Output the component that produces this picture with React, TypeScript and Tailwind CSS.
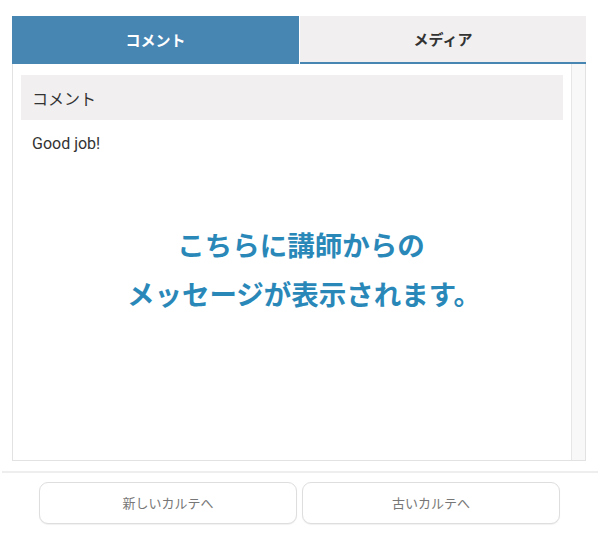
import React from "react";

const jp = { fontFamily: '"Noto Sans CJK JP", "Noto Sans", sans-serif' };

export default function App() {
  return (
    <div className="w-[600px] h-[540px] bg-white pt-[16px] overflow-hidden" style={jp}>
      <div className="ml-[12px] w-[574px]">
        <div className="flex h-[48px]">
          <div className="w-[287px] bg-[#4785b3] flex items-center justify-center text-white font-bold text-[15px]">
            コメント
          </div>
          <div className="w-[1px] bg-white" />
          <div className="flex-1 bg-[#f1eff0] border-b-2 border-[#4785b3] flex items-center justify-center text-[#333] font-bold text-[15px]">
            メディア
          </div>
        </div>
        <div className="h-[397px] border border-t-0 border-[#e2e2e2] flex">
          <div className="flex-1 flex flex-col pt-[11px] px-[8px]">
            <div className="h-[45px] bg-[#f1eff0] flex items-center pl-[11px] text-[16px] text-[#333]">
              コメント
            </div>
            <div
              className="pl-[11px] pt-[12px] text-[16px] text-[#333]"
              style={{ fontFamily: 'Roboto, "Noto Sans CJK JP", sans-serif' }}
            >
              Good job!
            </div>
            <div className="mt-[64px] pl-[18px] text-center text-[#2a88b9] font-bold text-[27.5px] leading-[49px]">
              <div>こちらに講師からの</div>
              <div className="pl-[6px]">メッセージが表示されます。</div>
            </div>
          </div>
          <div className="w-[14px] bg-[#f8f8f8] border-l border-[#e6e6e6]" />
        </div>
      </div>
      <div className="mt-[10px] mx-[2px] h-[2px] bg-[#eeeeee]" />
      <div className="mt-[9px] flex justify-center gap-[5px] pr-[1px]">
        <button className="w-[258px] h-[42px] rounded-[9px] border border-[#dedede] bg-white text-[13px] text-[#777] shadow-[0_1px_1px_rgba(0,0,0,0.06)]">
          新しいカルテへ
        </button>
        <button className="w-[258px] h-[42px] rounded-[9px] border border-[#dedede] bg-white text-[13px] text-[#777] shadow-[0_1px_1px_rgba(0,0,0,0.06)]">
          古いカルテへ
        </button>
      </div>
    </div>
  );
}
